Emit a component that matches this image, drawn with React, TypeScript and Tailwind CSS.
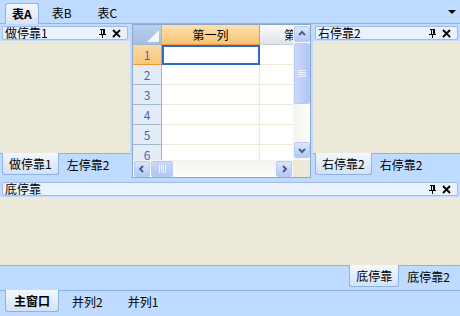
import React from 'react';

const FONT = { fontFamily: '"Noto Sans CJK SC", "DejaVu Sans", sans-serif' };

function PinIcon() {
  return (
    <svg width="9" height="9" viewBox="0 0 9 9" shapeRendering="crispEdges">
      <rect x="2" y="0" width="5" height="1" fill="#000" />
      <rect x="3" y="1" width="1" height="4" fill="#000" />
      <rect x="5" y="1" width="2" height="4" fill="#000" />
      <rect x="1" y="5" width="7" height="1" fill="#000" />
      <rect x="4" y="6" width="1" height="3" fill="#000" />
    </svg>
  );
}

function CloseIcon() {
  return (
    <svg width="9" height="9" viewBox="0 0 9 9">
      <path d="M1 1 L8 8 M8 1 L1 8" stroke="#000" strokeWidth="1.8" />
    </svg>
  );
}

function PanelHeader({ title }: { title: string }) {
  return (
    <div className="px-[2px] pt-[2px] pb-0">
      <div className="h-[14px] border border-[#9fbbe6] rounded-[2px] bg-[#eaf2fd] flex items-center pl-[2px] pr-[6px]">
        <span className="text-[12px] leading-none text-black flex-1">{title}</span>
        <div className="flex items-center gap-[5px]">
          <PinIcon />
          <CloseIcon />
        </div>
      </div>
    </div>
  );
}

function BottomTabs({ tabs, active, align = 'left' }: { tabs: string[]; active: number; align?: 'left' | 'right' }) {
  return (
    <div className={`h-[25px] bg-[#bfdbff] border-t border-[#8db2e3] flex ${align === 'right' ? 'justify-end pr-[2px]' : 'pl-[2px]'}`}>
      {tabs.map((t, i) =>
        i === active ? (
          <div
            key={t}
            className="h-[22px] -mt-px px-[6px] flex items-center border border-t-0 border-[#8db2e3] rounded-b-[3px] bg-linear-to-b from-[#f4f8fe] to-[#d3e2f6] text-[12px] text-black"
          >
            {t}
          </div>
        ) : (
          <div key={t} className="h-[22px] px-[8px] flex items-center text-[12px] text-black">
            {t}
          </div>
        )
      )}
    </div>
  );
}

function SideDock({ title, tabs, width }: { title: string; tabs: string[]; width: string }) {
  return (
    <div className={`${width} flex flex-col bg-[#bfdbff]`}>
      <PanelHeader title={title} />
      <div className="flex-1 bg-[#ece9d8] mt-px" />
      <BottomTabs tabs={tabs} active={0} />
    </div>
  );
}

function ScrollBtn({ dir }: { dir: 'up' | 'down' | 'left' | 'right' }) {
  const paths: Record<string, string> = {
    up: 'M2 6 L5 3 L8 6',
    down: 'M2 4 L5 7 L8 4',
    left: 'M6 2 L3 5 L6 8',
    right: 'M4 2 L7 5 L4 8',
  };
  return (
    <div className="w-[16px] h-[16px] rounded-[2px] border border-[#b7cbf5] bg-linear-to-b from-[#dbe6fd] to-[#b4c9f8] flex items-center justify-center">
      <svg width="10" height="10" viewBox="0 0 10 10">
        <path d={paths[dir]} stroke="#4d6185" strokeWidth="2" fill="none" />
      </svg>
    </div>
  );
}

function Grid() {
  const rows = [1, 2, 3, 4, 5, 6];
  return (
    <div className="w-[179px] border border-[#8ea7c8] bg-white flex flex-col overflow-hidden">
      <div className="flex-1 flex min-h-0">
        <div className="flex-1 flex flex-col min-w-0 overflow-hidden">
          {/* header row */}
          <div className="h-[20px] flex shrink-0">
            <div className="w-[29px] shrink-0 bg-linear-to-b from-[#b8cfee] to-[#a3bfe6] border-r border-b border-[#9eb6ce] relative">
              <svg className="absolute right-[2px] bottom-[2px]" width="12" height="12" viewBox="0 0 12 12">
                <path d="M12 0 L12 12 L0 12 Z" fill="#f4f7fb" />
              </svg>
            </div>
            <div className="w-[98px] shrink-0 bg-linear-to-b from-[#fbe2b0] to-[#f3c373] border-r border-b border-[#f29536] flex items-center justify-center text-[12px] text-black">
              第一列
            </div>
            <div className="flex-1 bg-linear-to-b from-[#fbfcfd] to-[#dfe4ea] border-b border-[#c5cfdc] text-[12px] text-black pl-[24px] flex items-center overflow-hidden whitespace-nowrap">
              第二列
            </div>
          </div>
          {rows.map((r) => (
            <div key={r} className="h-[20px] flex shrink-0">
              <div
                className={`w-[29px] shrink-0 border-r border-b flex items-center justify-center text-[12px] ${
                  r === 1
                    ? 'bg-linear-to-b from-[#fbd9a3] to-[#f7c979] border-[#f29536] text-[#3d6cb2]'
                    : 'bg-[#e4ecf7] border-[#9eb6ce] text-[#3d6cb2]'
                }`}
              >
                {r}
              </div>
              <div
                className={`w-[98px] shrink-0 border-r border-b border-[#ece9d8] ${
                  r === 1 ? 'outline-2 outline-[#316ac5] -outline-offset-2' : ''
                }`}
              />
              <div className="flex-1 border-b border-[#ece9d8]" />
            </div>
          ))}
        </div>
        {/* vertical scrollbar */}
        <div className="w-[17px] shrink-0 bg-linear-to-r from-[#f3f3ef] to-[#fdfdfb] flex flex-col items-center pt-px pb-[2px]">
          <ScrollBtn dir="up" />
          <div className="w-[16px] h-[61px] mt-px rounded-[2px] border border-[#b7cbf5] bg-linear-to-r from-[#c9d8fc] to-[#b1c6f7] flex items-center justify-center">
            <svg width="8" height="7" viewBox="0 0 8 7" shapeRendering="crispEdges">
              <rect x="0" y="0" width="8" height="1" fill="#eef3fe" />
              <rect x="0" y="2" width="8" height="1" fill="#eef3fe" />
              <rect x="0" y="4" width="8" height="1" fill="#eef3fe" />
              <rect x="0" y="6" width="8" height="1" fill="#eef3fe" />
            </svg>
          </div>
          <div className="flex-1" />
          <ScrollBtn dir="down" />
        </div>
      </div>
      {/* horizontal scrollbar */}
      <div className="h-[17px] shrink-0 flex">
        <div className="flex-1 bg-linear-to-b from-[#f3f3ef] to-[#fdfdfb] flex items-center pl-px pr-px">
          <ScrollBtn dir="left" />
          <div className="w-[22px] h-[16px] ml-px rounded-[2px] border border-[#b7cbf5] bg-linear-to-b from-[#c9d8fc] to-[#b1c6f7] flex items-center justify-center">
            <svg width="7" height="8" viewBox="0 0 7 8" shapeRendering="crispEdges">
              <rect x="0" y="0" width="1" height="8" fill="#eef3fe" />
              <rect x="2" y="0" width="1" height="8" fill="#eef3fe" />
              <rect x="4" y="0" width="1" height="8" fill="#eef3fe" />
              <rect x="6" y="0" width="1" height="8" fill="#eef3fe" />
            </svg>
          </div>
          <div className="flex-1" />
          <ScrollBtn dir="right" />
        </div>
        <div className="w-[17px] bg-[#ece9d8]" />
      </div>
    </div>
  );
}

export default function App() {
  const topTabs = ['表A', '表B', '表C'];
  const mainTabs = ['主窗口', '并列2', '并列1'];
  return (
    <div className="w-[460px] h-[316px] bg-[#bfdbff] flex flex-col overflow-hidden" style={FONT}>
      {/* top document tabs */}
      <div className="h-[24px] shrink-0 flex items-end pl-[5px] border-b border-[#8db2e3] relative">
        {topTabs.map((t, i) =>
          i === 0 ? (
            <div
              key={t}
              className="h-[21px] -mb-px px-[6px] flex items-center border border-b-0 border-[#8db2e3] rounded-t-[3px] bg-linear-to-b from-[#f4f8fe] to-[#d6e4f7] text-[12px] font-bold text-black"
            >
              {t}
            </div>
          ) : (
            <div key={t} className="h-[21px] px-[13px] flex items-center text-[12px] text-black">
              {t}
            </div>
          )
        )}
        <svg className="absolute right-[4px] top-[10px]" width="8" height="4" viewBox="0 0 8 4">
          <path d="M0 0 L8 0 L4 4 Z" fill="#000" />
        </svg>
      </div>

      {/* middle row */}
      <div className="h-[154px] shrink-0 flex gap-[2px]">
        <SideDock title="做停靠1" tabs={['做停靠1', '左停靠2']} width="w-[130px]" />
        <Grid />
        <SideDock title="右停靠2" tabs={['右停靠2', '右停靠2']} width="flex-1" />
      </div>

      {/* bottom dock */}
      <div className="flex-1 flex flex-col mt-[2px]">
        <PanelHeader title="底停靠" />
        <div className="flex-1 bg-[#ece9d8] mt-px" />
        <BottomTabs tabs={['底停靠', '底停靠2']} active={0} align="right" />
      </div>

      {/* main tabs */}
      <div className="h-[26px] shrink-0 flex pl-[5px] border-t border-[#8db2e3]">
        {mainTabs.map((t, i) =>
          i === 0 ? (
            <div
              key={t}
              className="h-[22px] -mt-px px-[8px] flex items-center border border-t-0 border-[#8db2e3] rounded-b-[3px] bg-linear-to-b from-[#f4f8fe] to-[#d3e2f6] text-[12px] font-bold text-black"
            >
              {t}
            </div>
          ) : (
            <div key={t} className="h-[22px] px-[12px] ml-px flex items-center text-[12px] text-black">
              {t}
            </div>
          )
        )}
      </div>
    </div>
  );
}
